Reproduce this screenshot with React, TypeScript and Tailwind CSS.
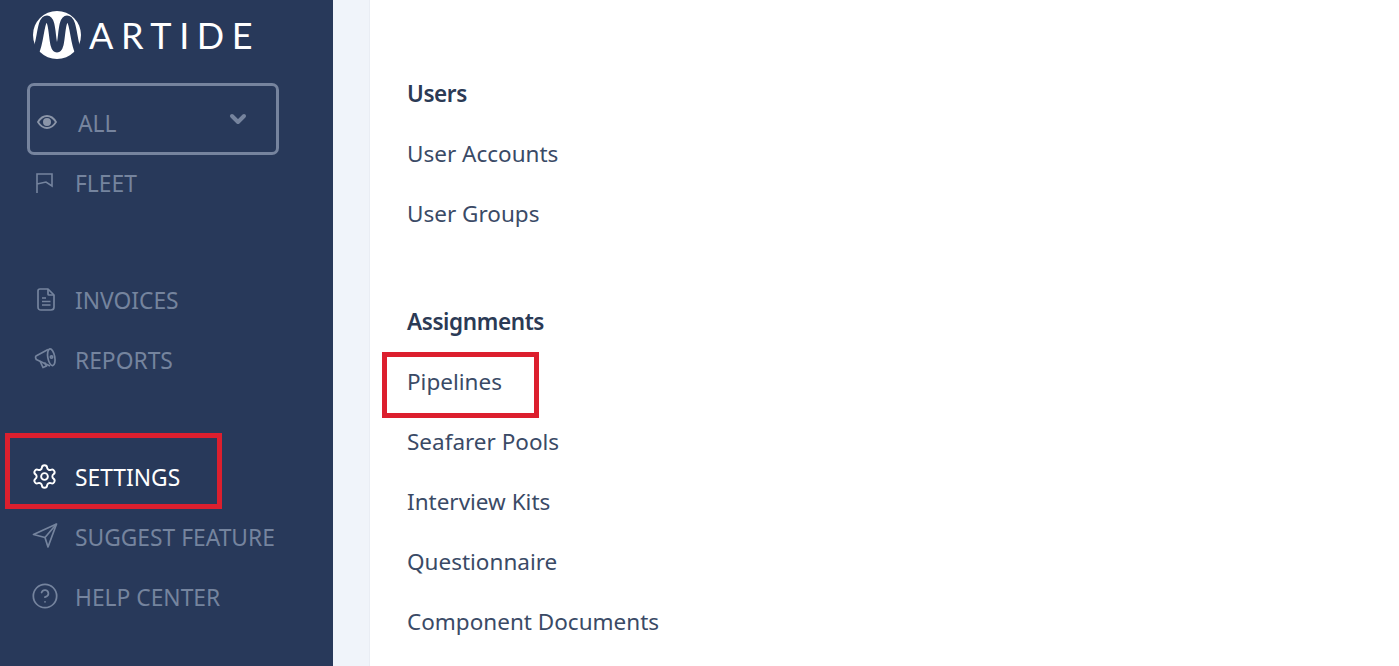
import React from 'react';
import { Settings, CircleHelp, ChevronDown } from 'lucide-react';

const Logo = () => (
    <div className="flex items-center h-[47px] ml-[33px]">
        <svg width="48" height="48" viewBox="0 0 48 48" className="shrink-0 mt-[-2px]">
            <circle cx="24" cy="24" r="24" fill="#ffffff" />
            <path d="M3 40 C8 30 7 8 14 8 C21 8 18 38 24 38 C30 38 27 8 34 8 C41 8 40 30 45 40" fill="none" stroke="#28395a" strokeWidth="7" />
        </svg>
        <span className="ml-[8px] mt-[-1px] text-[36px] leading-none tracking-[7.6px] text-white font-['Lato',sans-serif] font-normal">ARTIDE</span>
    </div>
);

const EyeIcon = () => (
    <svg width="20" height="14" viewBox="0 0 20 14" fill="none" className="shrink-0 mt-[6px]">
        <path d="M1 7 C4 2 7 1 10 1 C13 1 16 2 19 7 C16 12 13 13 10 13 C7 13 4 12 1 7Z" stroke="#8b95a8" strokeWidth="1.8" />
        <circle cx="10" cy="7" r="4" fill="#8b95a8" />
    </svg>
);

const FlagIcon = () => (
    <svg width="20" height="22" viewBox="0 0 20 22" fill="none" stroke="currentColor" strokeWidth="1.6" className="ml-[1px] mt-[-1px]">
        <path d="M3 21 V2 H18 V14 L12 10 L3 12" />
    </svg>
);

const FileIcon = () => (
    <svg width="18" height="23" viewBox="0 0 18 23" fill="none" stroke="currentColor" strokeWidth="1.7" strokeLinejoin="round" className="ml-[4px] mt-[-2px]">
        <path d="M3 1 H11 L17 7 V19 Q17 22 14 22 H4 Q1 22 1 19 V3 Q1 1 3 1Z" />
        <path d="M11 1 V6 Q11 7 12 7 H17" />
        <path d="M5 10 H9 M5 13.5 H13.5 M5 17 H13.5" />
    </svg>
);

const MegaphoneIcon = () => (
    <svg width="24" height="22" viewBox="0 0 24 22" fill="none" stroke="currentColor" strokeWidth="1.7" strokeLinejoin="round" className="ml-[1px] mt-[-4px]">
        <ellipse cx="17.3" cy="10.3" rx="3.5" ry="8.5" transform="rotate(-10 17.3 10.3)" />
        <path d="M14 2.5 L2 9 Q1 10 2.3 12.5 L16 19" />
        <path d="M6 14 L9 20.5 L12.5 19 L10.5 15.5" />
        <circle cx="17.5" cy="10" r="1.2" />
    </svg>
);

const SendIcon = () => (
    <svg width="26" height="26" viewBox="0 0 26 26" fill="none" stroke="currentColor" strokeWidth="1.7" strokeLinejoin="round" className="ml-[-1px] mt-[-4px]">
        <path d="M24.5 2 L1.5 12.5 L13 15.5 L16 25 Z" />
        <path d="M24.5 2 L13 15.5" />
    </svg>
);

const NavItem = ({ icon, label, active, className }: { icon: React.ReactNode; label: string; active?: boolean; className?: string }) => (
    <div className={`flex items-center h-[60px] pl-[33px] text-[22.8px] ${active ? 'text-white' : 'text-[#75849e]'} ${className ?? ''}`}>
        <span className="w-[42px] flex shrink-0">{icon}</span>
        <span className="mt-[2px]">{label}</span>
    </div>
);

const SectionTitle = ({ children, className }: { children: React.ReactNode; className?: string }) => (
    <div className={`h-[60px] flex items-center text-[22.5px] font-semibold tracking-[-0.4px] text-[#2b3a55] ${className ?? ''}`}>{children}</div>
);

const MenuLink = ({ children }: { children: React.ReactNode }) => (
    <div className="h-[60px] flex items-center text-[22.5px] text-[#3a4a66]">{children}</div>
);

export default function App() {
    return (
        <div className="relative flex h-[666px] w-[1399px] overflow-hidden bg-white font-['Noto_Sans',sans-serif]">
            {/* Sidebar */}
            <aside className="w-[333px] shrink-0 bg-[#28395a] pt-[12px]">
                <Logo />
                <div className="mt-[24px] ml-[27px] w-[252px] h-[72px] rounded-[7px] border-[3px] border-[#76849e] flex items-center pl-[7px] pr-[26px] text-[#76849e]">
                    <EyeIcon />
                    <span className="ml-[21px] mt-[10px] text-[22.8px]">ALL</span>
                    <ChevronDown size={24} strokeWidth={4} className="ml-auto" />
                </div>
                <NavItem className="mt-[-2px]" icon={<FlagIcon />} label="FLEET" />
                <NavItem className="mt-[57px]" icon={<FileIcon />} label="INVOICES" />
                <NavItem icon={<MegaphoneIcon />} label="REPORTS" />
                <NavItem className="mt-[57px]" active icon={<Settings size={27} strokeWidth={1.7} className="ml-[-2px] mt-[-2px]" />} label="SETTINGS" />
                <NavItem icon={<SendIcon />} label="SUGGEST FEATURE" />
                <NavItem icon={<CircleHelp size={28} strokeWidth={1.5} className="ml-[-2px] mt-[-3px]" />} label="HELP CENTER" />
            </aside>

            {/* Gutter */}
            <div className="w-[37px] shrink-0 bg-[#f0f4fa] border-r border-[#e9edf4]" />

            {/* Settings menu */}
            <main className="flex-1 pl-[37px] pt-[64px]">
                <SectionTitle>Users</SectionTitle>
                <MenuLink>User Accounts</MenuLink>
                <MenuLink>User Groups</MenuLink>
                <SectionTitle className="mt-[48px]">Assignments</SectionTitle>
                <MenuLink>Pipelines</MenuLink>
                <MenuLink>Seafarer Pools</MenuLink>
                <MenuLink>Interview Kits</MenuLink>
                <MenuLink>Questionnaire</MenuLink>
                <MenuLink>Component Documents</MenuLink>
            </main>

            {/* Red annotation boxes */}
            <div className="absolute left-[5px] top-[433px] w-[217px] h-[76px] border-[5px] border-[#dc1f2e]" />
            <div className="absolute left-[382px] top-[352px] w-[157px] h-[66px] border-[5px] border-[#dc1f2e]" />
        </div>
    );
}
